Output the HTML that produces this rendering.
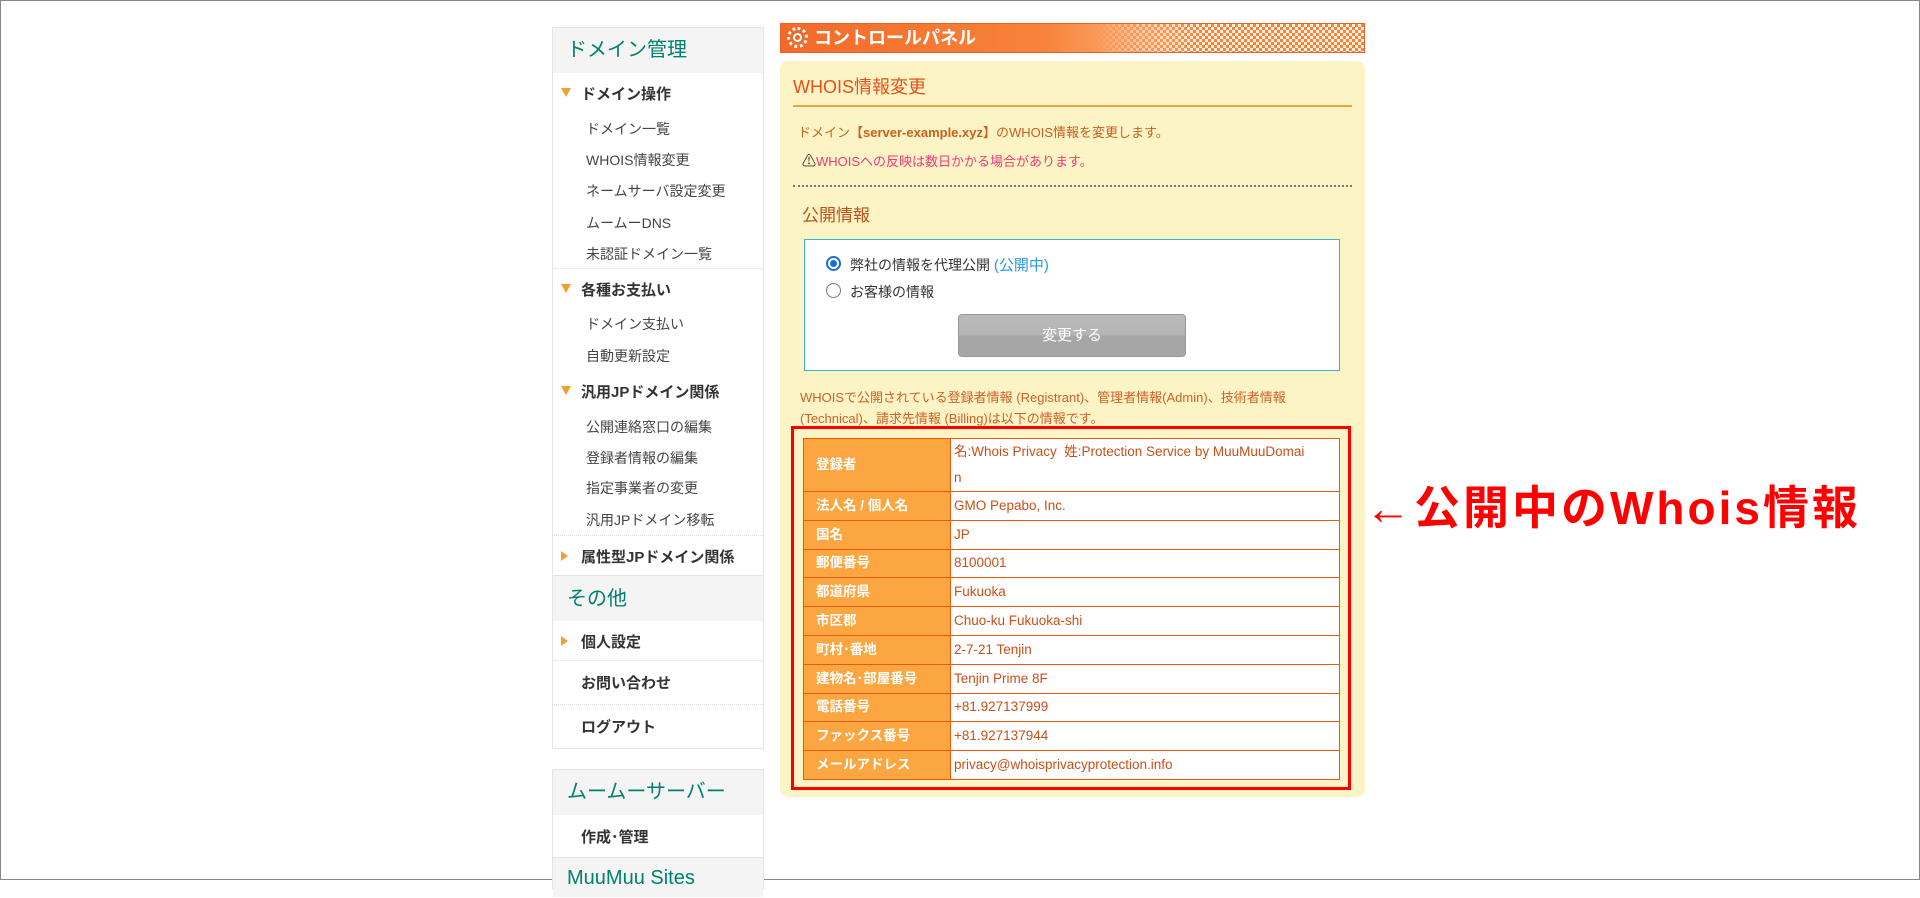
<!DOCTYPE html>
<html><head><meta charset="utf-8"><style>
*{margin:0;padding:0;box-sizing:border-box}
body{width:1920px;height:880px;background:#fff;position:relative;overflow:hidden;font-family:"Liberation Sans","Noto Sans CJK JP",sans-serif;border:1px solid #888;}
.a{position:absolute;white-space:nowrap}
.sb{position:absolute;left:551px;width:212px;border:1px solid #e4e4e4;background:#fff}
.hd{background:#f4f4f4;color:#00806e;font-size:20px;padding-left:14px}
.it{position:absolute;left:28px;font-size:14px;color:#444}
.bi{position:absolute;left:28px;font-size:15px;font-weight:bold;color:#333}
.tri{position:absolute;left:8px;width:0;height:0}
.dv{position:absolute;left:0;width:210px;border-top:1px dotted #ddd}
td{border:1px solid #e85a10;font-size:13.5px;height:28.8px;padding:0 0 0 3px;vertical-align:middle;line-height:16px}
td.l{background:#fba640;color:#fff;font-weight:bold;width:147px;padding-left:12px}
td.v{background:#fff;color:#c85018}
</style></head><body>

<div class="sb" style="top:26px;height:722px">
  <div class="hd" style="height:45px;line-height:45px">ドメイン管理</div>
  <div class="tri" style="top:60px;border-left:5px solid transparent;border-right:5px solid transparent;border-top:9px solid #f0a030"></div>
  <div class="bi" style="top:55px">ドメイン操作</div>
  <div class="it" style="top:91px;left:33px">ドメイン一覧</div>
  <div class="it" style="top:122px;left:33px">WHOIS情報変更</div>
  <div class="it" style="top:153px;left:33px">ネームサーバ設定変更</div>
  <div class="it" style="top:185px;left:33px">ムームーDNS</div>
  <div class="it" style="top:216px;left:33px">未認証ドメイン一覧</div>
  <div class="dv" style="top:240px"></div>
  <div class="tri" style="top:256px;border-left:5px solid transparent;border-right:5px solid transparent;border-top:9px solid #f0a030"></div>
  <div class="bi" style="top:251px">各種お支払い</div>
  <div class="it" style="top:286px;left:33px">ドメイン支払い</div>
  <div class="it" style="top:318px;left:33px">自動更新設定</div>
  <div class="tri" style="top:358px;border-left:5px solid transparent;border-right:5px solid transparent;border-top:9px solid #f0a030"></div>
  <div class="bi" style="top:353px">汎用JPドメイン関係</div>
  <div class="it" style="top:389px;left:33px">公開連絡窓口の編集</div>
  <div class="it" style="top:420px;left:33px">登録者情報の編集</div>
  <div class="it" style="top:450px;left:33px">指定事業者の変更</div>
  <div class="it" style="top:482px;left:33px">汎用JPドメイン移転</div>
  <div class="dv" style="top:507px"></div>
  <div class="tri" style="top:523px;border-top:5px solid transparent;border-bottom:5px solid transparent;border-left:7px solid #f0a030"></div>
  <div class="bi" style="top:518px">属性型JPドメイン関係</div>
  <div class="hd" style="position:absolute;top:547px;left:0;width:210px;height:46px;line-height:46px;border-top:1px solid #e4e4e4">その他</div>
  <div class="tri" style="top:608px;border-top:5px solid transparent;border-bottom:5px solid transparent;border-left:7px solid #f0a030"></div>
  <div class="bi" style="top:603px">個人設定</div>
  <div class="dv" style="top:632px"></div>
  <div class="bi" style="top:644px">お問い合わせ</div>
  <div class="dv" style="top:676px"></div>
  <div class="bi" style="top:688px">ログアウト</div>
</div>
<div class="sb" style="top:768px;height:120px">
  <div class="hd" style="height:45px;line-height:45px">ムームーサーバー</div>
  <div class="bi" style="top:56px;left:28px">作成･管理</div>
  <div class="hd" style="position:absolute;top:87px;left:0;width:210px;height:40px;line-height:40px;border-top:1px solid #e4e4e4">MuuMuu Sites</div>
</div>

<div class="a" style="left:779px;top:22px;width:585px;height:30px;border:1px solid #e8602a;background:linear-gradient(90deg,#f26a2a 0%,#f8833a 45%,#fbb27c 65%,#fdd7b8 100%)">
  <div style="position:absolute;right:0;top:0;width:270px;height:28px;background:repeating-conic-gradient(#f7843a 0 25%,#fff0e2 0 50%) 0 0/6px 6px;-webkit-mask:linear-gradient(90deg,transparent,#000 40%);mask:linear-gradient(90deg,transparent,#000 40%)"></div>
  <div style="position:absolute;left:6px;top:3px;width:21px;height:21px;border-radius:50%;border:3px dotted #fff;background:#f26a2a"><div style="margin:3px;width:9px;height:9px;border-radius:50%;border:2px solid #fff"></div></div>
  <div style="position:absolute;left:33px;top:3px;color:#fff;font-weight:bold;font-size:18px;line-height:22px">コントロールパネル</div>
</div>

<div class="a" style="left:779px;top:60px;width:585px;height:736px;background:#fdf4c5;border-radius:8px"></div>
<div class="a" style="left:792px;top:72px;color:#e8501a;font-size:18px">WHOIS情報変更</div>
<div class="a" style="left:792px;top:104px;width:559px;border-top:2px solid #f5a040"></div>
<div class="a" style="left:797px;top:121px;color:#c86020;font-size:13px">ドメイン<b>【server-example.xyz】</b>のWHOIS情報を変更します。</div>
<div class="a" style="left:801px;top:150px;color:#ee3a78;font-size:13px"><span style="color:#333;font-size:14px">⚠</span>WHOISへの反映は数日かかる場合があります。</div>
<div class="a" style="left:792px;top:184px;width:559px;border-top:2px dotted #777"></div>
<div class="a" style="left:801px;top:200px;color:#c0501a;font-size:17px">公開情報</div>
<div class="a" style="left:803px;top:238px;width:536px;height:132px;border:1px solid #38b5c8;background:#fff"></div>
<div class="a" style="left:825px;top:255px;width:15px;height:15px;border-radius:50%;border:2px solid #1a6ce0;background:#fff"><div style="margin:2px;width:7px;height:7px;border-radius:50%;background:#1a6ce0"></div></div>
<div class="a" style="left:849px;top:253px;font-size:14px;color:#333">弊社の情報を代理公開 <span style="color:#2a9ad8;font-size:15px">(公開中)</span></div>
<div class="a" style="left:825px;top:282px;width:15px;height:15px;border-radius:50%;border:1px solid #777;background:#fff"></div>
<div class="a" style="left:849px;top:281px;font-size:14px;color:#333">お客様の情報</div>
<div class="a" style="left:957px;top:313px;width:228px;height:43px;border:1px solid #999;border-radius:4px;background:linear-gradient(#bbb 0,#b4b4b4 50%,#a6a6a6 50%,#a6a6a6 100%);color:#fff;font-size:15px;text-align:center;line-height:41px">変更する</div>
<div class="a" style="left:799px;top:386px;color:#d0602a;font-size:13px;line-height:21px">WHOISで公開されている登録者情報 (Registrant)、管理者情報(Admin)、技術者情報<br>(Technical)、請求先情報 (Billing)は以下の情報です。</div>

<div class="a" style="left:790px;top:425px;width:560px;height:364px;border:3px solid #ff0000"></div>
<table class="a" style="left:802px;top:437px;width:537px;border-collapse:collapse">
<tr><td class="l" style="height:52px">登録者</td><td class="v" style="line-height:26px;white-space:normal">名:Whois Privacy&nbsp; 姓:Protection Service by MuuMuuDomai<br>n</td></tr>
<tr><td class="l">法人名 / 個人名</td><td class="v">GMO Pepabo, Inc.</td></tr>
<tr><td class="l">国名</td><td class="v">JP</td></tr>
<tr><td class="l">郵便番号</td><td class="v">8100001</td></tr>
<tr><td class="l">都道府県</td><td class="v">Fukuoka</td></tr>
<tr><td class="l">市区郡</td><td class="v">Chuo-ku Fukuoka-shi</td></tr>
<tr><td class="l">町村･番地</td><td class="v">2-7-21 Tenjin</td></tr>
<tr><td class="l">建物名･部屋番号</td><td class="v">Tenjin Prime 8F</td></tr>
<tr><td class="l">電話番号</td><td class="v">+81.927137999</td></tr>
<tr><td class="l">ファックス番号</td><td class="v">+81.927137944</td></tr>
<tr><td class="l">メールアドレス</td><td class="v">privacy@whoisprivacyprotection.info</td></tr>
</table>

<div class="a" style="left:1364px;top:480px;color:#ff0000;font-size:46px;font-weight:bold;line-height:54px;letter-spacing:3px">←公開中のWhois情報</div>
</body></html>
